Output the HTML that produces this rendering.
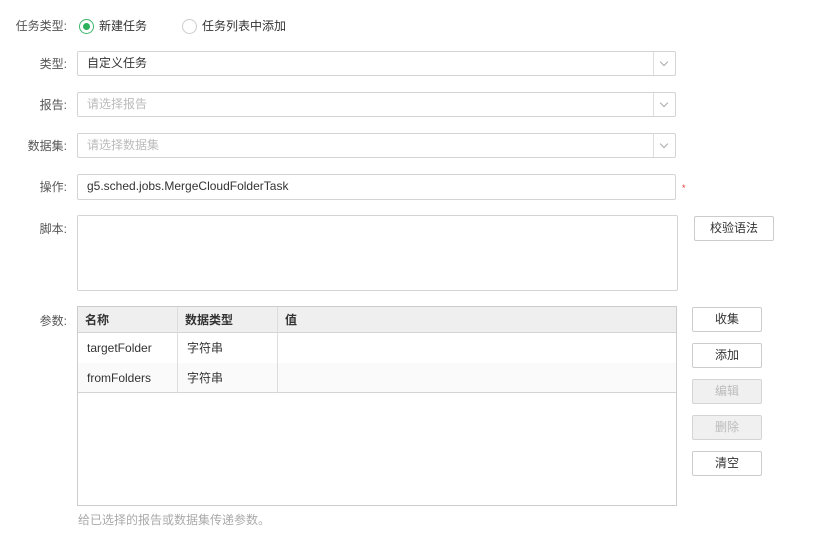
<!DOCTYPE html>
<html><head><meta charset="utf-8"><style>
*{box-sizing:border-box;margin:0;padding:0}
body{width:818px;height:538px;background:#fff;font-family:"Liberation Sans","Noto Sans CJK SC",sans-serif;font-size:12px;line-height:16px;color:#333;position:relative;overflow:hidden}
.a{position:absolute}
.lbl{position:absolute;right:751px;text-align:right;color:#555;white-space:nowrap}
.box{position:absolute;border:1px solid #d4d4d4;border-radius:2px;background:#fff;padding-left:9px;line-height:23px}
.ph{color:#bbb}
.arr{position:absolute;right:0;top:0;width:22px;height:23px;border-left:1px solid #ddd}
.arr:after{content:"";position:absolute;left:7px;top:7px;width:5px;height:5px;border-right:1px solid #aaa;border-bottom:1px solid #aaa;transform:rotate(45deg)}
.btn{position:absolute;border:1px solid #ccc;border-radius:2px;background:#fff;text-align:center;line-height:22px;color:#333}
.dis{background:#f0f0f0;color:#bbb;border-color:#d4d4d4}
.c{position:absolute;border-right:1px solid #ddd}
.cell{position:absolute;height:30px;line-height:30px}
</style></head><body>
<div class="lbl" style="top:18px">任务类型:</div>
<div class="a" style="left:79px;top:19px;width:15px;height:15px;border:1px solid #3db66b;border-radius:50%"><div class="a" style="left:3px;top:3px;width:7px;height:7px;border-radius:50%;background:#2cb05c"></div></div>
<div class="a" style="left:99px;top:18px">新建任务</div>
<div class="a" style="left:182px;top:19px;width:15px;height:15px;border:1px solid #ccc;border-radius:50%"></div>
<div class="a" style="left:202px;top:18px">任务列表中添加</div>

<div class="lbl" style="top:56px">类型:</div>
<div class="box" style="left:77px;top:51px;width:599px;height:25px">自定义任务<div class="arr"></div></div>
<div class="lbl" style="top:97px">报告:</div>
<div class="box ph" style="left:77px;top:92px;width:599px;height:25px">请选择报告<div class="arr"></div></div>
<div class="lbl" style="top:138px">数据集:</div>
<div class="box ph" style="left:77px;top:133px;width:599px;height:25px">请选择数据集<div class="arr"></div></div>
<div class="lbl" style="top:179px">操作:</div>
<div class="box" style="left:77px;top:174px;width:599px;height:26px">g5.sched.jobs.MergeCloudFolderTask</div>
<div class="a" style="left:682px;top:180px;color:#e33;font-size:9px">*</div>

<div class="lbl" style="top:221px">脚本:</div>
<div class="box" style="left:77px;top:215px;width:601px;height:76px"></div>
<div class="btn" style="left:694px;top:216px;width:80px;height:25px">校验语法</div>

<div class="lbl" style="top:313px">参数:</div>
<div class="a" style="left:77px;top:306px;width:600px;height:200px;border:1px solid #ccc">
 <div class="a" style="left:0;top:0;width:598px;height:26px;background:#efefef;border-bottom:1px solid #d4d4d4"></div>
 <div class="a" style="left:0;top:56px;width:598px;height:30px;background:#fafafa"></div>
 <div class="a" style="left:0;top:85px;width:598px;border-bottom:1px solid #d4d4d4"></div>
 <div class="c" style="left:0;top:0;width:100px;height:86px"></div>
 <div class="c" style="left:100px;top:0;width:100px;height:86px"></div>
 <div class="cell" style="left:7px;top:-2px;font-weight:bold">名称</div>
 <div class="cell" style="left:107px;top:-2px;font-weight:bold">数据类型</div>
 <div class="cell" style="left:207px;top:-2px;font-weight:bold">值</div>
 <div class="cell" style="left:9px;top:26px">targetFolder</div>
 <div class="cell" style="left:109px;top:26px">字符串</div>
 <div class="cell" style="left:9px;top:56px">fromFolders</div>
 <div class="cell" style="left:109px;top:56px">字符串</div>
</div>
<div class="btn" style="left:692px;top:307px;width:70px;height:25px">收集</div>
<div class="btn" style="left:692px;top:343px;width:70px;height:25px">添加</div>
<div class="btn dis" style="left:692px;top:379px;width:70px;height:25px">编辑</div>
<div class="btn dis" style="left:692px;top:415px;width:70px;height:25px">删除</div>
<div class="btn" style="left:692px;top:451px;width:70px;height:25px">清空</div>
<div class="a" style="left:78px;top:512px;color:#aaa">给已选择的报告或数据集传递参数。</div>
</body></html>
